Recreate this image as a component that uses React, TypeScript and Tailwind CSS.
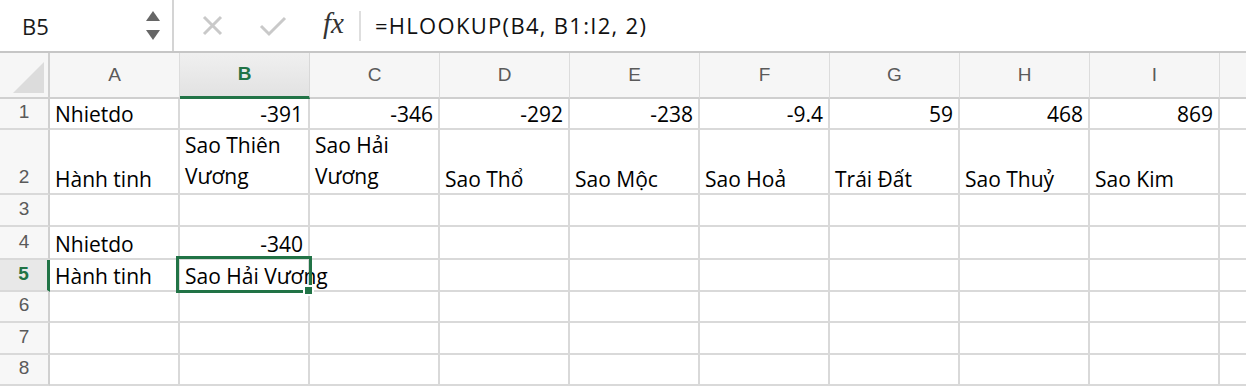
import React from "react";

const COLS = ["A", "B", "C", "D", "E", "F", "G", "H", "I"];

type Cell = { t: string; r?: boolean; wrap?: boolean };

const DATA: Record<number, Record<string, Cell>> = {
  1: {
    A: { t: "Nhietdo" },
    B: { t: "-391", r: true },
    C: { t: "-346", r: true },
    D: { t: "-292", r: true },
    E: { t: "-238", r: true },
    F: { t: "-9.4", r: true },
    G: { t: "59", r: true },
    H: { t: "468", r: true },
    I: { t: "869", r: true },
  },
  2: {
    A: { t: "Hành tinh" },
    B: { t: "Sao Thiên Vương", wrap: true },
    C: { t: "Sao Hải Vương", wrap: true },
    D: { t: "Sao Thổ" },
    E: { t: "Sao Mộc" },
    F: { t: "Sao Hoả" },
    G: { t: "Trái Đất" },
    H: { t: "Sao Thuỷ" },
    I: { t: "Sao Kim" },
  },
  3: {},
  4: { A: { t: "Nhietdo" }, B: { t: "-340", r: true } },
  5: { A: { t: "Hành tinh" }, B: { t: "Sao Hải Vương" } },
  6: {},
  7: {},
  8: {},
};

const ROWS = [1, 2, 3, 4, 5, 6, 7, 8];

export default function App() {
  return (
    <div className="w-[1246px] h-[386px] overflow-hidden bg-white relative select-none">
      {/* Formula bar */}
      <div className="h-[51px] flex items-stretch bg-white">
        <div className="w-[174px] flex items-center border-r-2 border-[#d4d4d4] pl-[22px] pr-[12px]">
          <span className="flex-1 text-[22px] text-[#1a1a1a] font-['Open_Sans',sans-serif] leading-none">
            B5
          </span>
          <div className="flex flex-col gap-[9px] items-center">
            <svg width="14" height="10" viewBox="0 0 14 10">
              <path d="M7 0 L14 10 L0 10 Z" fill="#666666" />
            </svg>
            <svg width="14" height="10" viewBox="0 0 14 10">
              <path d="M0 0 L14 0 L7 10 Z" fill="#666666" />
            </svg>
          </div>
        </div>
        <div className="flex items-center pl-[28px]">
          <svg width="21" height="21" viewBox="0 0 21 21">
            <path d="M2 2 L19 19 M19 2 L2 19" stroke="#c9c9c9" strokeWidth="3" />
          </svg>
          <svg width="28" height="22" viewBox="0 0 28 22" className="ml-[36px]">
            <path d="M2 11 L10 19 L26 3" stroke="#c9c9c9" strokeWidth="3" fill="none" />
          </svg>
          <span className="ml-[36px] text-[29px] italic text-[#333] font-['Liberation_Serif',serif] leading-none -mt-[5px]">
            fx
          </span>
          <div className="ml-[15px] w-[2px] h-[30px] bg-[#dedede]" />
          <span className="ml-[14px] text-[22px] text-[#111] font-['Open_Sans',sans-serif] leading-none tracking-[1.3px] -mt-[2px]">
            =HLOOKUP(B4, B1:I2, 2)
          </span>
        </div>
      </div>
      <div className="h-[2px] bg-[#c6c6c6]" />

      {/* Grid */}
      <div className="grid grid-cols-[50px_repeat(9,130px)_1fr] grid-rows-[46px_31px_65px_32px_33px_32px_31px_32px_31px]">
        {/* Corner */}
        <div className="bg-[#f6f6f6] border-r-2 border-b-2 border-[#d0d0d0] flex items-end justify-end pr-[4px] pb-[4px]">
          <svg width="31" height="31" viewBox="0 0 31 31">
            <path d="M31 0 L31 31 L0 31 Z" fill="#dcdcdc" />
          </svg>
        </div>
        {COLS.map((c) =>
          c === "B" ? (
            <div
              key={c}
              className="bg-gradient-to-b from-[#f0f0f0] to-[#e2e2e2] border-r border-[#d8d8d8] border-b-[3px] border-b-[#217346] flex items-center justify-center text-[19px] font-bold text-[#217346] font-['Liberation_Sans',sans-serif]"
            >
              {c}
            </div>
          ) : (
            <div
              key={c}
              className="bg-[#f6f6f6] border-r border-[#dcdcdc] border-b-2 border-b-[#cfcfcf] flex items-center justify-center text-[19px] text-[#5a5a5a] font-['Liberation_Sans',sans-serif]"
            >
              {c}
            </div>
          )
        )}
        <div className="bg-[#f6f6f6] border-b-2 border-b-[#cfcfcf]" />

        {ROWS.map((r) => (
          <React.Fragment key={r}>
            {r === 5 ? (
              <div className="bg-[#e8e8e8] border-r-[3px] border-r-[#217346] border-b-2 border-b-[#d9d9d9] flex items-end justify-center pb-[2px] text-[19px] font-bold text-[#217346] font-['Liberation_Sans',sans-serif] leading-[28px]">
                {r}
              </div>
            ) : (
              <div className="bg-[#f7f7f7] border-r-2 border-[#d0d0d0] border-b-2 border-b-[#d9d9d9] flex items-end justify-center pb-[2px] text-[19px] text-[#5a5a5a] font-['Liberation_Sans',sans-serif] leading-[28px]">
                {r}
              </div>
            )}
            {COLS.map((c) => {
              const cell = DATA[r][c];
              const overflow = r === 5 && c === "B";
              return (
                <div
                  key={c}
                  className={`border-r-2 border-b-2 border-[#d9d9d9] flex items-end min-w-0 font-['Open_Sans',sans-serif] text-[21px] text-black ${
                    cell?.r ? "justify-end pr-[5px]" : "pl-[5px]"
                  } ${overflow ? "overflow-visible relative z-10" : "overflow-hidden"}`}
                >
                  {cell ? (
                    cell.wrap ? (
                      <span className="leading-[31px] pb-[1px] whitespace-normal">
                        {cell.t}
                      </span>
                    ) : (
                      <span className="leading-[28px] whitespace-nowrap">
                        {cell.t}
                      </span>
                    )
                  ) : null}
                </div>
              );
            })}
            <div className="border-b-2 border-[#d9d9d9]" />
          </React.Fragment>
        ))}
      </div>

      {/* Selection overlay for B5 */}
      <div className="absolute left-[176px] top-[256px] w-[136px] h-[37px] border-[3px] border-[#217346] z-20 pointer-events-none" />
      <div className="absolute left-[303px] top-[285px] w-[11px] h-[11px] bg-[#217346] border-2 border-white z-30" />
    </div>
  );
}
